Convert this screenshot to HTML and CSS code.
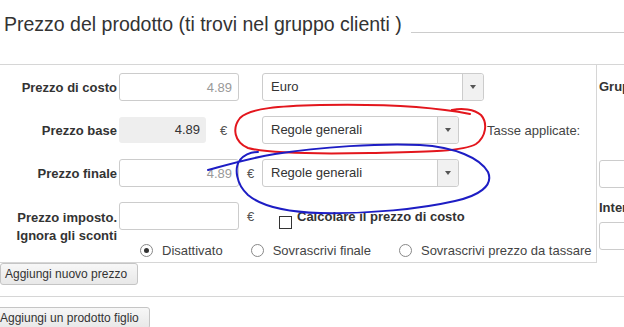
FILE: index.html
```html
<!DOCTYPE html>
<html lang="it">

<head>
    <meta charset="UTF-8">
    <meta name="viewport" content="width=device-width, initial-scale=1.0">
    <title>Prezzo del prodotto</title>
    <link rel="stylesheet" href="styles.css">
</head>

<body>
    <div class="heading">
        <h2>Prezzo del prodotto (ti trovi nel gruppo clienti )</h2>
        <span class="heading-line"></span>
    </div>

    <div class="price-panel">
        <div class="price-main">
            <div class="price-row">
                <label class="price-label">Prezzo di costo</label>
                <input class="price-input" type="text" value="4.89">
                <span class="unit"></span>
                <div class="select-box select-wide">
                    <span class="select-text">Euro</span>
                    <span class="select-arrow"></span>
                </div>
            </div>

            <div class="price-row">
                <label class="price-label">Prezzo base</label>
                <span class="price-readonly">4.89</span>
                <span class="unit unit-base">€</span>
                <div class="select-box">
                    <span class="select-text">Regole generali</span>
                    <span class="select-arrow"></span>
                </div>
                <span class="tax-label">Tasse applicate:</span>
            </div>

            <div class="price-row">
                <label class="price-label">Prezzo finale</label>
                <input class="price-input" type="text" value="4.89">
                <span class="unit">€</span>
                <div class="select-box">
                    <span class="select-text">Regole generali</span>
                    <span class="select-arrow"></span>
                </div>
            </div>

            <div class="price-row price-row-last">
                <label class="price-label two-line">Prezzo imposto.<br>Ignora gli sconti</label>
                <div class="override">
                    <div class="override-top">
                        <input class="price-input" type="text" value="">
                        <span class="unit">€</span>
                        <span class="checkbox"></span>
                        <span class="check-text">Calcolare il prezzo di costo</span>
                    </div>
                    <div class="radio-row">
                        <span class="radio-option"><span class="radio checked"></span>Disattivato</span>
                        <span class="radio-option"><span class="radio"></span>Sovrascrivi finale</span>
                        <span class="radio-option"><span class="radio"></span>Sovrascrivi prezzo da tassare</span>
                    </div>
                </div>
            </div>
        </div>

        <div class="price-side">
            <div class="side-label">Gruppo clienti</div>
            <input class="side-input" type="text" value="">
            <div class="side-label side-label-small">Intervallo</div>
            <input class="side-input side-input-small" type="text" value="">
        </div>
    </div>

    <div class="actions">
        <button class="btn">Aggiungi nuovo prezzo</button>
    </div>
    <div class="actions actions-child">
        <button class="btn btn-child">Aggiungi un prodotto figlio</button>
    </div>

    <!-- pen marks drawn over the form -->
    <svg class="annotations" width="624" height="327" viewBox="0 0 624 327">
        <path class="mark-red"
            d="M452,110 C462,108 474,109 481,115 C488,123 486,137 476,144 C462,152 420,152 370,153 C320,154 270,154 248,148 C234,142 232,128 240,118 C250,108 280,106 320,105 C370,104 430,106 470,114" />
        <path class="mark-blue"
            d="M208,170 C230,164 250,158 275,154 C320,147 380,143 420,145 C455,147 480,158 488,172 C494,186 478,196 455,201 C420,209 370,214 320,213 C285,212 260,205 248,195 C236,184 234,168 240,160 C245,154 252,152 258,152" />
    </svg>
</body>

</html>
```

FILE: styles.css
```css
* {
    box-sizing: border-box;
}

html,
body {
    margin: 0;
    padding: 0;
}

body {
    position: relative;
    width: 624px;
    height: 327px;
    overflow: hidden;
    font-family: "Liberation Sans", Arial, sans-serif;
    font-size: 13px;
    color: #333;
    background-color: #fff;
}

/* heading */

.heading {
    display: flex;
    align-items: flex-start;
    height: 64px;
    padding: 12px 0 0 4px;
}

.heading h2 {
    margin: 0;
    font-size: 19.5px;
    font-weight: normal;
    line-height: 24px;
    color: #333;
    white-space: nowrap;
}

.heading-line {
    flex: 1;
    height: 1px;
    margin: 20px 0 0 9px;
    background-color: #ccc;
}

/* price panel */

.price-panel {
    display: flex;
    border-top: 1px solid #d6d6d6;
}

.price-main {
    flex: none;
    width: 597px;
    padding: 8px 0 2px;
    border-right: 1px solid #d6d6d6;
    border-bottom: 1px solid #d6d6d6;
}

.price-row {
    display: flex;
    align-items: center;
    height: 28px;
    margin-bottom: 15px;
}

.price-row-last {
    align-items: flex-start;
    height: auto;
    margin-bottom: 0;
}

.price-label {
    flex: none;
    width: 117px;
    margin-right: 2px;
    text-align: right;
    font-weight: bold;
    color: #333;
}

.price-label.two-line {
    padding-top: 7px;
    line-height: 18px;
}

.price-input {
    flex: none;
    width: 120px;
    height: 28px;
    padding: 0 6px;
    border: 1px solid #ccc;
    border-radius: 3px;
    text-align: right;
    font: 13px "Liberation Sans", Arial, sans-serif;
    color: #999;
    background-color: #fff;
}

.price-readonly {
    flex: none;
    width: 87px;
    height: 26px;
    padding-right: 6px;
    border-radius: 3px;
    line-height: 26px;
    text-align: right;
    color: #333;
    background-color: #eee;
}

.unit {
    flex: none;
    width: 23px;
    text-align: center;
    color: #555;
}

.unit.unit-base {
    width: 56px;
    padding-left: 14px;
    text-align: left;
}

.select-box {
    flex: none;
    display: flex;
    width: 197px;
    height: 28px;
    border: 1px solid #ccc;
    border-radius: 3px;
    background-color: #fff;
}

.select-box.select-wide {
    width: 222px;
}

.select-text {
    flex: 1;
    padding-left: 8px;
    line-height: 26px;
    color: #333;
}

.select-arrow {
    display: flex;
    align-items: center;
    justify-content: center;
    width: 21px;
    border-left: 1px solid #ccc;
    border-radius: 0 3px 3px 0;
    background-color: #f1f1f1;
}

.select-arrow::after {
    content: '';
    border-left: 3px solid transparent;
    border-right: 3px solid transparent;
    border-top: 4px solid #555;
}

.tax-label {
    margin-left: 28px;
    color: #444;
    white-space: nowrap;
}

.override {
    display: flex;
    flex-direction: column;
}

.override-top {
    display: flex;
    align-items: center;
    height: 28px;
}

.checkbox {
    flex: none;
    width: 13px;
    height: 13px;
    margin: 12px 5px 0 17px;
    border: 1px solid #333;
    background-color: #fff;
}

.check-text {
    font-weight: bold;
    color: #333;
    white-space: nowrap;
}

.radio-row {
    display: flex;
    align-items: center;
    height: 20px;
    margin-top: 10px;
    padding-left: 21px;
    color: #444;
    white-space: nowrap;
}

.radio-option {
    display: flex;
    align-items: center;
    margin-right: 28px;
}

.radio {
    display: grid;
    place-items: center;
    width: 13px;
    height: 13px;
    margin-right: 9px;
    border: 1px solid #888;
    border-radius: 50%;
    background-color: #fff;
}

.radio.checked::after {
    content: '';
    width: 5px;
    height: 5px;
    border-radius: 50%;
    background-color: #333;
}

/* right column */

.price-side {
    flex: 1;
    min-width: 0;
    overflow: hidden;
    padding: 8px 0 0 2px;
}

.side-label {
    font-weight: bold;
    line-height: 28px;
    white-space: nowrap;
}

.side-label-small {
    margin-top: 12px;
    line-height: 16px;
}

.side-input {
    display: block;
    width: 200px;
    height: 28px;
    margin-top: 59px;
    border: 1px solid #ccc;
    border-radius: 3px;
}

.side-input-small {
    margin-top: 6px;
}

/* buttons */

.actions {
    padding-bottom: 11px;
}

.actions-child {
    padding-top: 10px;
    border-top: 1px solid #d6d6d6;
}

.btn {
    display: block;
    height: 22px;
    padding: 0 10px 0 4px;
    border: 1px solid #c5c5c5;
    border-radius: 3px;
    font: 12px "Liberation Sans", Arial, sans-serif;
    color: #333;
    background: linear-gradient(#f7f7f7, #e8e8e8);
}

.btn-child {
    margin-left: -5px;
}

/* pen marks */

.annotations {
    position: absolute;
    top: 0;
    left: 0;
    pointer-events: none;
}

.annotations path {
    fill: none;
    stroke-width: 2;
    stroke-linecap: round;
    stroke-linejoin: round;
}

.mark-red {
    stroke: #e3161d;
}

.mark-blue {
    stroke: #1d1dc4;
}
```
